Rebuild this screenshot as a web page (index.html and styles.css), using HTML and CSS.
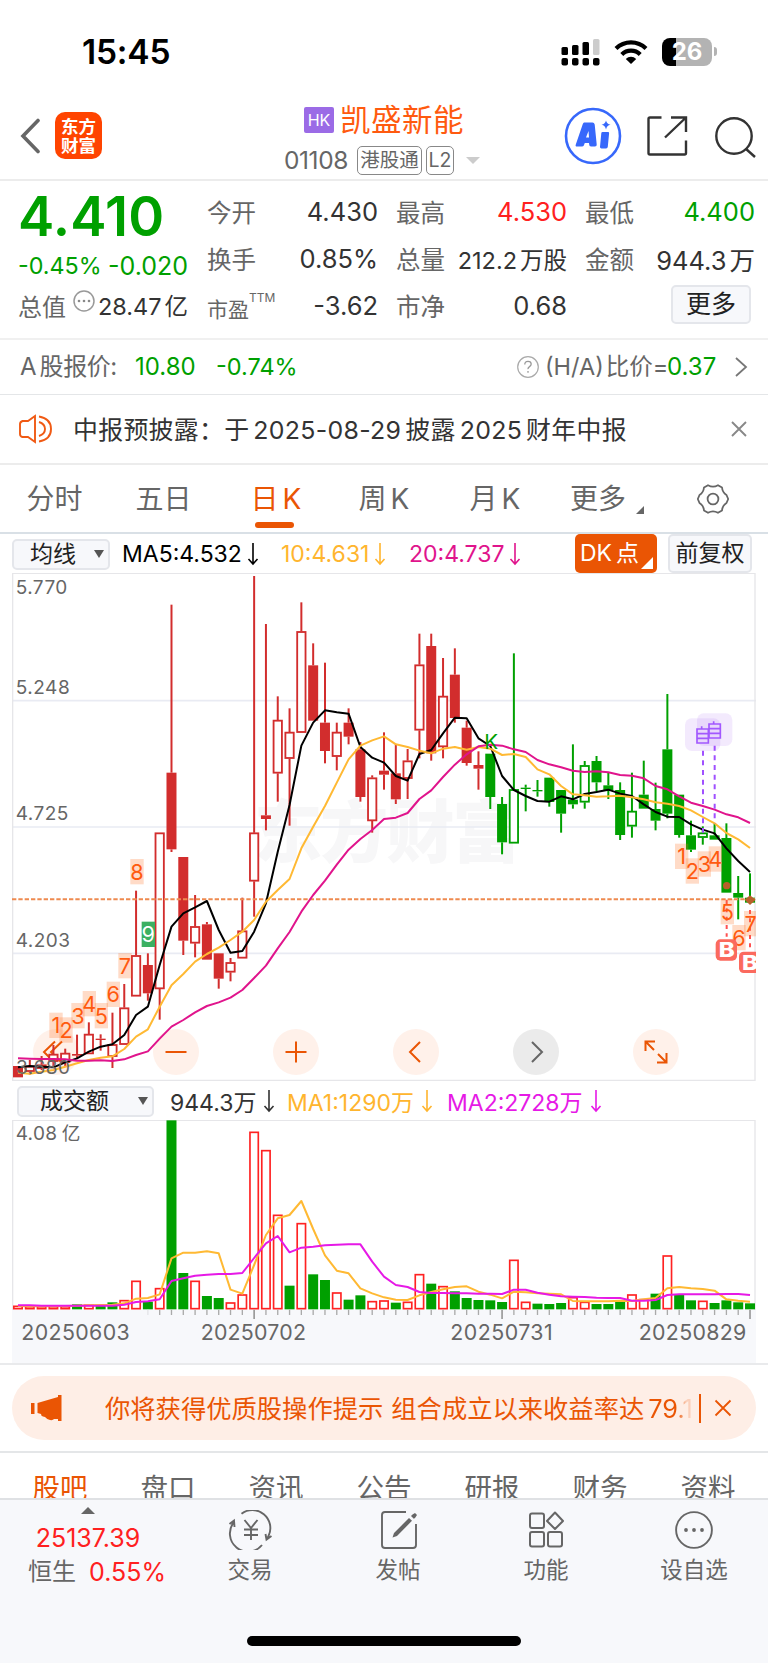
FILE: index.html
```html
<!DOCTYPE html>
<html lang="zh-CN">
<head>
<meta charset="utf-8">
<title>凯盛新能 01108</title>
<link rel="stylesheet" href="styles.css">
</head>
<body>
<svg class="defs" width="0" height="0">
  <symbol id="down" viewBox="0 0 12 24"><path d="M6 1v21M1.500 17L6 22l4.500-5" fill="none" stroke="currentColor" stroke-width="1.600"/></symbol>
</svg>
<div class="phone">
  <div class="status">
    <span class="time">15:45</span>
    <div class="status-icons">
      <svg width="40" height="28" viewBox="0 0 40 28"><g fill="#000"><rect x="0.500" y="9" width="6.500" height="8" rx="1.500"/><rect x="11" y="7" width="6.500" height="10" rx="1.500"/><rect x="21.500" y="4" width="6.500" height="13" rx="1.500"/><rect x="0.500" y="20" width="6.500" height="7.500" rx="2"/><rect x="11" y="20" width="6.500" height="7.500" rx="2"/><rect x="21.500" y="20" width="6.500" height="7.500" rx="2"/><rect x="32" y="20" width="6.500" height="7.500" rx="2"/></g><rect x="32" y="1" width="6.500" height="16" rx="1.500" fill="#ccc"/></svg>
      <svg width="34" height="26" viewBox="0 0 34 26"><g fill="none" stroke="#000" stroke-width="4.200"><path d="M2 9.500a21.500 21.500 0 0 1 30 0"/><path d="M7.800 15.500a13 13 0 0 1 18.400 0"/></g><path d="M17 25l-5.200-5a7.400 7.400 0 0 1 10.400 0z"/></svg>
      <div class="battery"><span>26</span></div><i class="battery-cap"></i>
    </div>
  </div>

  <header class="header">
    <svg class="back" width="20" height="36" viewBox="0 0 20 36"><path d="M18 2.500L3 18l15 15.500" fill="none" stroke="#666" stroke-width="3.600" stroke-linecap="round"/></svg>
    <div class="logo"><span>东方</span><span>财富</span></div>
    <div class="title">
      <div class="name"><span class="hk">HK</span><b>凯盛新能</b></div>
      <div class="code"><span class="num">01108</span><span class="tag hgt">港股通</span><span class="tag l2">L2</span><i class="caret"></i></div>
    </div>
    <div class="tools">
      <svg width="58" height="58" viewBox="0 0 58 58"><circle cx="29" cy="29" r="27" fill="#fff" stroke="#3768fb" stroke-width="2.600"/><g fill="#3768fb"><path fill-rule="evenodd" d="M21 15.500h7.500q1.800 0 2.200 2l2 20q.2 2-1.700 2H27q-1.800 0-1.800-2l-.2-1.500h-4.200l-1 2.500q-.5 1-1.800 1h-5q-2 0-1.200-2l7-20.500q.6-1.500 1.200-1.500zm3.500 8.500l-2.500 6.500h3z"/><path d="M38.500 25h5.500q1.300 0 1.100 1.300l-1.300 13.500q-.2 1.700-1.800 1.700h-4.500q-1.700 0-1.500-1.700l1.300-13.500q.1-1.300 1.200-1.300z"/><path d="M42 13.500q.7 3.500 4.500 4.300q-3.800.8-4.500 4.700q-.7-3.900-4.500-4.700q3.800-.8 4.500-4.300z"/></g></svg>
      <svg width="42" height="42" viewBox="0 0 42 42"><path d="M15.500 2.500H4q-1.500 0-1.500 1.500v34q0 1.500 1.500 1.500h34.500q1.500 0 1.500-1.500V25.500M25 2.500h15V17M40 2.500L19 22.500" fill="none" stroke="#333" stroke-width="2.400"/></svg>
      <svg width="42" height="42" viewBox="0 0 42 42"><circle cx="20" cy="19" r="17.700" fill="none" stroke="#333" stroke-width="2.400"/><path d="M31.500 31.500l9.500 8.500" stroke="#333" stroke-width="2.400"/></svg>
    </div>
  </header>

  <section class="quote">
    <div class="price">
      <strong>4.410</strong>
      <div class="change"><span>-0.45%</span><em>-0.020</em></div>
      <div class="cap"><label>总值</label><svg width="24" height="24" viewBox="0 0 24 24"><circle cx="12" cy="12" r="10" fill="none" stroke="#999" stroke-width="1.500"/><g fill="#888"><circle cx="7" cy="12" r="1.300"/><circle cx="12" cy="12" r="1.300"/><circle cx="17" cy="12" r="1.300"/></g></svg><span>28.47<i>亿</i></span></div>
    </div>
    <dl>
      <div><dt>今开</dt><dd>4.430</dd></div>
      <div><dt>换手</dt><dd class="wide">0.85%</dd></div>
      <div><dt class="pe">市盈<sup>TTM</sup></dt><dd>-3.62</dd></div>
    </dl>
    <dl>
      <div><dt>最高</dt><dd class="up">4.530</dd></div>
      <div><dt>总量</dt><dd class="vol-value">212.2<i>万股</i></dd></div>
      <div><dt>市净</dt><dd>0.68</dd></div>
    </dl>
    <dl>
      <div><dt>最低</dt><dd class="down">4.400</dd></div>
      <div><dt>金额</dt><dd class="amount">944.3<i>万</i></dd></div>
      <div class="more-row"><button class="more">更多</button></div>
    </dl>
  </section>

  <section class="ashare">
    <span class="a-label">A<i>股报价:</i></span><span class="a-price">10.80</span><span class="a-pct">-0.74%</span>
    <svg class="help" width="24" height="24" viewBox="0 0 24 24"><circle cx="12" cy="12" r="10.300" fill="none" stroke="#aaa" stroke-width="1.200"/><path d="M8.800 9.500q0-3.200 3.200-3.200t3.200 2.800q0 1.500-1.700 2.500t-1.500 2.600M12 16v1.800" fill="none" stroke="#999" stroke-width="1.300"/></svg>
    <span class="ratio">(H/A)<i>比价</i>=</span><span class="ratio-value">0.37</span>
    <svg class="chev" width="14" height="22" viewBox="0 0 14 22"><path d="M2 2l10 9L2 20" fill="none" stroke="#777" stroke-width="1.800"/></svg>
  </section>

  <section class="notice">
    <svg width="34" height="30" viewBox="0 0 34 30"><g fill="none" stroke="#f05a14" stroke-width="1.900"><path d="M16 2L9 7H3.500Q1 8 1 10v10q0 2.500 2.500 3H9l7 5z"/><path d="M20 2.500q12 2 12 12.500T20 27.500M20 8q6 2 6 7t-6 7"/></g></svg>
    <p>中报预披露：于<i>2025-08-29</i>披露<i>2025</i>财年中报</p>
    <svg class="close" width="18" height="18" viewBox="0 0 18 18"><path d="M2 2l14 14M16 2L2 16" stroke="#888" stroke-width="1.900"/></svg>
  </section>

  <nav class="periods">
    <span>分时</span><span>五日</span><span class="k active">日<i>K</i></span><span class="k">周<i>K</i></span><span class="k">月<i>K</i></span><span class="has-more">更多<i></i></span>
    <svg width="34" height="34" viewBox="0 0 34 34"><g fill="none" stroke="#666" stroke-width="1.800"><path d="M12 3.200Q17 6 22 3.200L26 5.500Q26.500 10.500 30.500 13L32.200 17l-1.700 4Q26.500 23.500 26 28.500l-4 2.300Q17 28 12 30.800L8 28.500Q7.500 23.500 3.500 21L1.800 17l1.700-4Q7.500 10.500 8 5.500z" stroke-linejoin="round"/><circle cx="17" cy="17" r="5.400"/></g></svg>
  </nav>

  <div class="ma-row">
    <button class="select"><span>均线</span><i></i></button>
    <span class="ma m5"><b>MA5:4.532</b><svg><use href="#down"/></svg></span>
    <span class="ma m10"><b>10:4.631</b><svg><use href="#down"/></svg></span>
    <span class="ma m20"><b>20:4.737</b><svg><use href="#down"/></svg></span>
    <button class="dk">DK<span>点</span><i></i></button>
    <button class="adj">前复权</button>
  </div>

  <div class="chart">
    <div class="controls">
      <span><svg viewBox="0 0 46 46"><path d="M29 12.500L18 23l11 11M22 12.500L11 23l11 11"/></svg></span>
      <span><svg viewBox="0 0 46 46"><path d="M12.500 23h21"/></svg></span>
      <span><svg viewBox="0 0 46 46"><path d="M12.500 23h21M23 12.500v21"/></svg></span>
      <span><svg viewBox="0 0 46 46"><path d="M27 13L17 23l10 10"/></svg></span>
      <span class="off"><svg viewBox="0 0 46 46"><path d="M19 13l10 10-10 10"/></svg></span>
      <span><svg viewBox="0 0 46 46"><path d="M12.500 22v-9.500H22M12.500 12.500l8.500 8.500M33.500 24v9.500H24M33.500 33.500L25 25"/></svg></span>
    </div>
    <svg id="kline" width="744" height="508" viewBox="36 9 2232 1524"></svg>
  </div>

  <div class="vol-row">
    <button class="select"><span>成交额</span><i></i></button>
    <span class="ma v0"><b>944.3万</b><svg><use href="#down"/></svg></span>
    <span class="ma v1"><b>MA1:1290万</b><svg><use href="#down"/></svg></span>
    <span class="ma v2"><b>MA2:2728万</b><svg><use href="#down"/></svg></span>
  </div>
  <div class="volume"><svg id="volume" width="744" height="243" viewBox="36 120 2232 729"></svg></div>

  <section class="promo-wrap">
    <div class="promo">
      <svg width="32" height="28" viewBox="0 0 32 28"><path d="M0 9h3.500v11H0zM6.500 9L27 3V1h3.500v26H27v-2h-4q-1 1.500-4 1t-5-3l-2-.5q-2-.5-2-2.500l-3.500-1z" fill="#ea5504"/></svg>
      <p>你将获得优质股操作提示<u></u>组合成立以来收益率达<i>79.1</i></p>
      <svg class="close" width="18" height="18" viewBox="0 0 18 18"><path d="M1.500 1.500l15 15M16.500 1.500l-15 15" stroke="#ea5504" stroke-width="1.800"/></svg>
    </div>
  </section>

  <nav class="subtabs"><span class="active">股吧</span><span>盘口</span><span>资讯</span><span>公告</span><span>研报</span><span>财务</span><span>资料</span></nav>

  <footer class="dock">
    <div class="index"><i></i><strong>25137.39</strong><p><span>恒生</span><b>0.55%</b></p></div>
    <div class="item"><svg width="44" height="40" viewBox="0 0 44 40"><g fill="none" stroke="#666" stroke-width="1.900"><path d="M13.500 3.700A18 18 0 0 1 40.500 26l-1.500 3M43.500 26l-5 3.500-1-5.500M34 35A18 18 0 0 1 6 12M1.500 14l4.500-3.500L6.500 17"/><path d="M16.500 10l6.500 8 6.500-8M23 18v12M16 19.500h14M16 25h14"/></g></svg><span>交易</span></div>
    <div class="item"><svg width="44" height="40" viewBox="0 0 44 40"><g fill="none" stroke="#666" stroke-width="1.900"><path d="M30 2H9q-3 0-3 3v30q0 3 3 3h28q3 0 3-3V14"/></g><path d="M33 8l3 2.800L21 26l-4.500 1.500L18 23zM36.500 4.500L39 3l2 2-2 3-1.200.800L35 6z" fill="#666"/></svg><span>发帖</span></div>
    <div class="item"><svg width="44" height="40" viewBox="0 0 44 40"><g fill="none" stroke="#666" stroke-width="2"><rect x="6" y="3.500" width="14" height="14.500" rx="2"/><rect x="6" y="22" width="14" height="14.500" rx="2"/><rect x="24" y="22" width="14" height="14.500" rx="2"/><path d="M31 2.500l8 8.500-8 8-8-8z" stroke-linejoin="round"/></g></svg><span>功能</span></div>
    <div class="item"><svg width="44" height="40" viewBox="0 0 44 40"><circle cx="22" cy="20" r="17.900" fill="none" stroke="#666" stroke-width="1.900"/><g fill="#666"><circle cx="14" cy="20" r="1.900"/><circle cx="22" cy="20" r="1.900"/><circle cx="30" cy="20" r="1.900"/></g></svg><span>设自选</span></div>
    <div class="home"></div>
  </footer>
</div>
<script src="chart.js"></script>
</body>
</html>
```
FILE: styles.css
```css
* { box-sizing: border-box; }
body { margin: 0; background: #fff; font-family: Inter, "Noto Sans CJK SC", sans-serif; color: #333; font-weight: 400; }
p, dl, dd { margin: 0; }
i, em { font-style: normal; }
button { font: inherit; color: #222; padding: 0; margin: 0; border: 2px solid #e4e6eb; border-radius: 5px; background: #f7f8fb; }
svg { display: block; flex: none; }
.defs { position: absolute; }
.phone { width: 768px; height: 1663px; overflow: hidden; }

.status { height: 103px; margin-bottom: -1px; display: flex; justify-content: space-between; padding: 0 51px 0 82px; align-items: center; }
.time { font-size: 33.500px; font-weight: 600; color: #000; letter-spacing: -0.2px; line-height: 40px; }
.status-icons { display: flex; align-items: center; }
.status-icons svg + svg { margin: 0 14px 0 13px; }
.battery { width: 50px; height: 28px; border-radius: 8px; background: linear-gradient(90deg, #000 14px, #b3b3b3 14px); color: #fff; font-weight: 700; font-size: 24px; line-height: 28px; text-align: center; }
.battery-cap { width: 3px; height: 9px; margin-left: 2px; border-radius: 0 4px 4px 0; background: #b3b3b3; }

.header { height: 79px; border-bottom: 2px solid #ececec; display: flex; padding-left: 20px; }
.back { margin-top: 16px; }
.logo { width: 47px; height: 47px; margin: 10px 0 0 15px; border-radius: 10px; background: #ff4400; color: #fff; font-weight: 700; font-size: 17.500px; line-height: 19px; display: flex; flex-direction: column; align-items: center; justify-content: center; }
.title { width: 220px; margin-left: 182px; }
.name { display: flex; align-items: center; height: 36px; padding-left: 20px; }
.hk { width: 30px; height: 26px; background: #9b6be6; color: #fff; font-size: 16px; line-height: 26px; text-align: center; border-radius: 2px; margin-right: 6px; }
.name b { font-weight: 400; font-size: 30.500px; letter-spacing: .5px; color: #ff5a0f; line-height: 36px; margin-top: -1px; }
.code { display: flex; align-items: center; height: 30px; margin-top: 7px; color: #666; }
.code .num { font-size: 24.500px; width: 73px; letter-spacing: -.4px; }
.tag { border: 1.500px solid #888; border-radius: 5px; height: 29px; line-height: 26px; text-align: center; font-size: 19.500px; }
.hgt { width: 65px; } .l2 { width: 28px; margin-left: 4px; }
.caret { border: 7px solid transparent; border-top-color: #ccc; border-bottom: 0; margin-left: 12px; }
.tools { margin-left: auto; display: flex; align-items: flex-start; padding: 5px 12px 0 0; width: 204px; }
.tools svg:nth-child(2) { margin: 8px 0 0 24px; }
.tools svg:nth-child(3) { margin: 10px -4px 0 26px; }

.quote { height: 159px; border-bottom: 2px solid #f0f0f0; display: grid; grid-template-columns: 170px 169px 169px 169px; column-gap: 20px; padding: 7px 13px 0 18px; }
.price strong { display: block; font-weight: 600; font-size: 54.500px; line-height: 56px; height: 60px; color: #00a000; letter-spacing: .2px; }
.change { display: flex; justify-content: space-between; align-items: center; height: 36px; color: #00a000; font-size: 23.300px; line-height: 36px; }
.change em { font-size: 25px; }
.cap { display: flex; align-items: center; height: 36px; margin-top: 3px; }
.cap label { font-size: 24px; color: #666; width: 54px; }
.cap svg { margin-top: -9px; }
.cap span { font-size: 23.500px; white-space: nowrap; margin-left: auto; }
.cap i, .amount i, .vol-value i { margin-left: 3px; }
dl { margin-left: -1px; }
dl > div { height: 47px; display: flex; justify-content: space-between; align-items: center; white-space: nowrap; }
dt { font-size: 24.500px; color: #666; }
dd { font-size: 25.500px; }
dl:nth-of-type(1) dd, dl:nth-of-type(2) dd { margin-right: -1px; }
dt.pe { font-size: 21px; position: relative; top: 2px; }
dt sup { font-size: 12px; vertical-align: 15px; line-height: 0; }
.up { color: #ff2020; } .down { color: #00a000; }
.vol-value { font-size: 23.500px; }
.amount { font-size: 25.500px; }
dl > .more-row { justify-content: flex-end; }
.more { width: 80px; height: 39px; font-size: 25px; line-height: 34px; margin: -3px 4px 0 0; }

.ashare { height: 55px; border-bottom: 1px solid #e4e6e8; display: flex; align-items: center; padding: 0 20px 0 20px; font-size: 24px; line-height: 32px; color: #666; white-space: nowrap; }
.a-label { width: 115px; } .a-label i { margin-left: 3px; letter-spacing: -.4px; } .a-price { width: 81px; color: #00a000; } .a-pct { color: #00a000; font-size: 23.500px; }
.a-label, .ratio { margin-top: -1px; }
.help { margin-left: auto; } .ratio { margin-left: 5px; width: 122px; font-size: 23.500px; } .ratio-value { color: #00a000; width: 47px; }
.ratio i { margin-left: 2px; }
.chev { margin-left: 20px; }
.notice { height: 70px; border-bottom: 2px solid #ececec; display: flex; align-items: center; padding: 0 20px 0 19px; color: #333; }
.notice p { margin: -3px 0 0 20px; font-size: 24.900px; letter-spacing: .3px; white-space: nowrap; }
.notice i { padding: 0 4px; }
.notice .close { margin-left: auto; }

.periods { height: 69px; border-bottom: 2px solid #d9e0e6; display: grid; grid-template-columns: 109px 109px 116px 100px 122px 84px 128px; align-items: center; text-align: center; font-size: 28px; color: #666; white-space: nowrap; }
.periods span { position: relative; line-height: 68px; height: 68px; }
.periods .k i { margin-left: 4px; }
.periods .active { color: #ea5504; }
.periods .active::after { content: ""; position: absolute; left: 37px; bottom: 5px; width: 39px; height: 6px; border-radius: 3px; background: #ea5504; }
.has-more i { position: absolute; right: -4px; bottom: 19px; border-left: 8px solid transparent; border-bottom: 8px solid #666; }
.periods svg { margin-left: 56px; }

.ma-row { height: 39px; display: grid; grid-template-columns: 110px 159px 128px 166px 82px 84px; padding-left: 12px; align-items: center; }
.ma-row .adj { margin-left: 11px; width: 84px; height: 39px; font-size: 23px; line-height: 35px; white-space: nowrap; }
.select { width: 98px; height: 31px; display: flex; align-items: center; justify-content: space-between; padding: 0 4px 0 16px; font-size: 23px; line-height: 27px; margin-top: 1px; }
.select i { border: 5px solid transparent; border-top: 8px solid #555; border-bottom: 0; }
.ma { display: flex; align-items: center; white-space: nowrap; }
.ma b { font-weight: 400; font-size: 23px; }
.ma svg { width: 12px; height: 24px; margin-left: 5px; }
.m5 { color: #000; } .m10 { color: #ffb52e; } .m20 { color: #e0148c; }
.dk { position: relative; height: 39px; width: 82px; border: 0; background: #ea5504; color: #fff; font-size: 23px; text-align: left; padding-left: 5px; line-height: 39px; white-space: nowrap; }
.dk span { margin-left: 4px; }
.dk i { position: absolute; right: 4px; bottom: 4px; border-left: 12px solid transparent; border-bottom: 12px solid #fff; }

.chart { position: relative; margin: 0 12px; height: 509px; }
#kline { position: relative; z-index: 1; }
.controls { position: absolute; left: 21px; top: 456px; width: 646px; display: flex; justify-content: space-between; }
.controls span { width: 46px; height: 46px; border-radius: 50%; background: #fff1ea; }
.controls path { fill: none; stroke: #ea5504; stroke-width: 2; }
.controls .off { background: #ebebeb; }
.controls .off path { stroke: #666; }

.vol-row { height: 38px; display: flex; align-items: center; padding-left: 17px; }
.vol-row .select { width: 137px; padding-left: 21px; margin: 0 16px 0 0; }
.vol-row .ma { margin-top: -1px; }
.vol-row .ma svg { margin-left: 7px; }
.v0 { width: 117px; color: #333; } .v1 { width: 160px; color: #ffb52e; } .v2 { color: #e619e6; }
.volume { margin: 0 12px; height: 243px; }
.promo-wrap { height: 90px; border-top: 2px solid #e9eaec; border-bottom: 2px solid #e4e6e8; padding: 11px 12px 0; }
.promo { height: 64px; border-radius: 32px; background: #feeee6; color: #ea5504; display: flex; align-items: center; padding: 0 24px 0 19px; }
.promo p { width: 596px; margin-left: 42px; border-right: 2px solid #ea5504; font-size: 25.300px; line-height: 29px; height: 29px; white-space: nowrap; overflow: hidden; }
.promo u { display: inline-block; width: 8px; }
.promo p i { margin-left: 4px; background: linear-gradient(90deg, #ea5504 65%, #fbd0bb 85%); -webkit-background-clip: text; color: transparent; }
.promo .close { margin-left: auto; }
.subtabs { height: 45px; overflow: hidden; display: grid; grid-template-columns: repeat(7, 108px); padding-left: 6px; text-align: center; font-size: 27.500px; line-height: 70px; color: #666; }
.subtabs .active { color: #ea5504; }
.dock { position: relative; height: 165px; border-top: 2px solid #dfe1e4; background: #f7f8fb; display: grid; grid-template-columns: 176px repeat(4, 148px); color: #666; }
.index { text-align: center; font-size: 24px; padding-top: 7px; }
.index i { display: block; width: 0; margin: 0 auto; border: 7px solid transparent; border-bottom-color: #666; border-top: 0; }
.index strong { display: block; font-weight: 400; font-size: 25px; color: #ff2020; line-height: 30px; margin-top: 9px; }
.index p { margin: 3px 0 0 28px; display: flex; justify-content: space-between; width: 138px; line-height: 32px; white-space: nowrap; }
.index b { color: #ff2020; font-weight: 400; font-size: 25px; }
.item { display: flex; flex-direction: column; align-items: center; padding-top: 10px; font-size: 22.500px; line-height: 34px; }
.item span { margin-top: 3px; }
.home { position: absolute; left: 247px; top: 136px; width: 274px; height: 10px; border-radius: 5px; background: #000; }
```
FILE: chart.js
```js
// Both charts are laid out in device pixels at 3x density, one bar every 35.42 units.
const X0 = 54, STEP = 35.42, RED = '#d22d2d', GREEN = '#00a000';
const x = i => X0 + i * STEP;
// kind, high, body top, body bottom, low; lower-case kinds are hollow
const candles = `R 1488 1488 1522 1522|r 1470 1488 1505 1514|r 1458 1484 1496 1500|r 1425 1452 1475 1490|r 1436 1449 1478 1490|R 1394 1452 1457 1466|r 1357 1392 1452 1452|R 1393 1406 1410 1442|r 1328 1423 1460 1494|r 1242 1313 1424 1424|r 962 1156 1279 1279|R 1150 1185 1270 1292|r 788 788 1257 1349|R 104 608 838 846|R 861 861 1112 1155|r 975 1069 1120 1162|R 1056 1063 1169 1169|R 1150 1150 1226 1256|r 1164 1177 1207 1234|r 983 1082 1165 1165|r 18 788 934 1040|R 162 736 747 781|r 379 450 610 695|r 415 486 566 767|r 97 184 488 488|R 220 286 452 452|R 278 458 543 580|r 458 486 560 601|R 415 458 500 523|R 516 538 681 695|r 616 623 753 788|R 487 602 614 659|R 523 610 688 702|r 537 572 626 687|r 191 284 481 565|R 191 228 550 572|r 264 378 531 565|R 235 314 444 458|R 452 473 579 587|R 544 585 596 659|G 551 551 681 717|G 681 702 817 853|g 250 658 820 820|G 644 653 657 724|G 630 660 664 680|G 623 623 696 710|G 660 660 731 788|G 523 689 703 716|g 573 586 697 716|G 558 573 637 665|G 608 646 660 687|G 637 660 795 810|g 608 723 769 803|G 572 674 716 716|G 638 717 752 781|G 372 538 731 745|G 674 674 795 803|G 752 796 839 846|g 769 788 803 824|G 760 796 809 809|G 760 804 968 968|G 918 969 983 1048|G 910 983 998 998`.split('|').map(s => s.split(' '));
const ma5 = [1492,1488,1490,1492,1477,1465,1445,1430,1423,1395,1335,1310,1185,1070,1030,1012,993,1080,1148,1143,1085,1000,845,705,527,458,421,427,431,531,563,578,618,632,552,540,490,443,445,505,528,618,660,678,693,695,679,688,672,666,659,671,678,703,726,740,741,763,779,790,835,873,906];
const ma10 = [1508,1511,1505,1500,1490,1480,1470,1463,1459,1437,1400,1378,1310,1246,1212,1175,1152,1133,1110,1085,1050,995,960,927,835,770,708,638,568,527,511,499,523,531,542,550,536,531,539,531,536,555,552,561,598,613,648,673,676,680,679,677,682,688,697,701,708,721,741,760,789,808,834];
const ma20 = [1465,1466,1467,1467,1468,1472,1472,1471,1473,1468,1455,1444,1406,1370,1350,1327,1308,1297,1283,1260,1224,1187,1135,1086,1025,975,932,884,839,807,780,747,743,729,687,661,621,584,553,529,524,527,538,546,570,583,592,602,606,604,607,615,617,625,648,658,679,698,708,719,733,742,759];
const rect = (a, b, w, h, o) => `<rect x="${a}" y="${b}" width="${w}" height="${h}" ${o}/>`;
const line = (a, b, c, d, o) => `<path d="M${a} ${b}L${c} ${d}" fill="none" ${o}/>`;
const poly = (v, color) => `<polyline points="${v.map((y, i) => x(i) + ',' + y).join(' ')}" fill="none" stroke="${color}" stroke-width="6" stroke-linejoin="round"/>`;
const text = (a, b, s, o) => `<text x="${a}" y="${b}" ${o}>${s}</text>`;
const axis = 'font-size="57" fill="#666"';

let k = text(762, 860, '东方财富', 'font-size="205" font-weight="900" fill="#f7f7f8" textLength="800"');
[392, 771, 1150].forEach(y => k += line(36, y, 2268, y, 'stroke="#e9ebf3" stroke-width="5"'));
k += '<path d="M38 1540V10H2265V1531H38" fill="none" stroke="#e6e6e9" stroke-width="4"/>';
k += text(47, 73, '5.770', axis + ' textLength="155"') + text(47, 373, '5.248', axis + ' textLength="162"') + text(47, 751, '4.725', axis + ' textLength="158"') + text(47, 1132, '4.203', axis + ' textLength="163"');
candles.forEach(([kind, hi, top, bot, lo], i) => {
  const c = kind.toUpperCase() === 'R' ? RED : GREEN, cx = x(i);
  const s = `stroke="${c}" stroke-width="6"`;
  k += line(cx, hi, cx, top, s) + line(cx, bot, cx, lo, s);
  k += kind === kind.toUpperCase() ? rect(cx - 15, top, 30, bot - top, `fill="${c}"`) : rect(cx - 12.5, +top + 2, 25, bot - top - 4, `fill="#fff" stroke="${c}" stroke-width="5.500"`);
});
const badge = (a, b, n, green) => rect(a - 20, b - 38, 40, 76, green ? 'fill="#3bb062"' : 'fill="#ff7020" fill-opacity=".25"') + text(a, b + 24, n, `font-size="65" text-anchor="middle" fill="${green ? '#fff' : '#ff5a0f'}"`);
k += line(36, 988, 2265, 988, 'stroke="#ee8a50" stroke-width="6" stroke-dasharray="13 6"');
k += poly(ma5, '#000') + poly(ma10, '#ffb933') + poly(ma20, '#e0148c');
[[168,1366],[198,1380],[234,1337],[268,1301],[304,1337],[340,1273],[375,1187],[411,905]].forEach((p, i) => k += badge(p[0], p[1], i + 1));
k += badge(445, 1093, 9, true);
// dashed connector lines from the marker bubbles down to their candles
k += line(2109, 542, 2109, 788, 'stroke="#a050ff" stroke-width="6" stroke-dasharray="15 14"') + line(2144, 527, 2144, 760, 'stroke="#a050ff" stroke-width="6" stroke-dasharray="15 14"');
[[2055, 445], [2091, 430]].forEach(([a, b]) => {
  k += rect(a, b, 106, 98, 'rx="20" fill="#a060f0" fill-opacity=".13"');
  k += `<path d="M${a + 36} ${b + 76}V${b + 32}H${a + 70}V${b + 76}M${a + 36} ${b + 46}H${a + 70}M${a + 36} ${b + 60}H${a + 70}M${a + 34} ${b + 74}H${a + 72}M${a + 50} ${b + 32}V${b + 24}" fill="none" stroke="#a258ff" stroke-width="5"/>`;
});
k += line(2180, 990, 2180, 1100, 'stroke="#ff5050" stroke-width="6" stroke-dasharray="12 13"') + line(2250, 1020, 2250, 1140, 'stroke="#ff5050" stroke-width="6" stroke-dasharray="12 13"');
[[521,859],[553,903],[589,882],[622,867],[658,1025],[693,1103],[728,1061]].forEach((p, i) => k += badge(p[0] + 1524, p[1], i + 1));
[[2147, 1108], [2217, 1145]].forEach(([a, b]) => k += rect(a, b, 64, 64, 'rx="14" fill="#fb6a5e"') + text(a + 9, b + 54, 'B', 'font-size="62" font-weight="800" fill="#fff" textLength="48" lengthAdjust="spacingAndGlyphs"'));
k += '<circle cx="2180" cy="947" r="11" fill="#b8602a"/><path d="M2234 989L2250 976L2267 989L2250 1005Z" fill="#b8602a"/>';
k += text(1453, 536, 'K', `font-size="62" fill="${GREEN}"`) + text(48, 1512, '3.680', axis + ' textLength="162"');
document.getElementById('kline').innerHTML = k;

const bars = 'r679 r680 r680 r680 r680 G673 r676 G676 G667 r662 r604 G665 r626 G121 G579 r604 G648 G654 r669 r645 r157 r212 r406 G617 r431 G583 G600 r639 G659 G646 r665 r663 G668 r667 r584 G611 r620 G634 G654 G660 G661 G666 r541 r667 G671 G672 G669 r653 r667 G672 G672 G663 r645 r659 G641 r528 G645 G661 r664 G669 G661 G667 G670'.split(' ');
const v1 = [678,679,679,679,678,677,676,675,674,670,656,654,643,535,518,518,514,520,629,641,555,465,415,405,363,447,526,572,580,625,640,652,659,660,646,636,628,621,619,635,644,655,635,637,640,641,643,663,664,664,664,662,663,658,654,625,621,625,627,632,658,662,665];
const v2 = [676,676,677,677,677,677,677,677,677,674,666,664,658,603,595,587,584,582,582,579,534,490,468,517,503,500,496,494,493,493,545,590,615,621,636,639,639,640,640,641,641,642,629,629,638,644,649,650,651,653,654,654,662,662,660,645,643,643,643,643,642,642,645];
let v = rect(36, 689, 2232, 170, 'fill="#f7f8fb"') + '<path d="M38 690V121H2265V690" fill="none" stroke="#e6e6e9" stroke-width="4"/>';
v += text(47, 179, '4.08', axis + ' textLength="124"') + text(185, 181, '亿', 'font-size="56" fill="#666"');
bars.forEach((b, i) => {
  const y = +b.slice(1), cx = x(i);
  v += b[0] === 'G' ? rect(cx - 15, y, 30, 688 - y, `fill="${GREEN}"`) : rect(cx - 12.5, y, 25, 686 - y, 'fill="#fff" stroke="#f22" stroke-width="5"');
  if (i > 10) v += [20, 41, 62].includes(i) ? line(cx, 689, cx, 717, 'stroke="#999" stroke-width="5"') : line(cx, 689, cx, 705, `stroke="${i < 12 ? '#e4e4e8' : '#aaa'}" stroke-width="4"`);
});
v += poly(v1, '#ffb933') + poly(v2, '#e619e6');
[[64, '20250603', 325], [602, '20250702', 316], [1351, '20250731', 307], [1916, '20250829', 323]].forEach(([a, s, w]) => v += text(a, 780, s, `font-size="64" fill="#666" textLength="${w}"`));
document.getElementById('volume').innerHTML = v;
```
